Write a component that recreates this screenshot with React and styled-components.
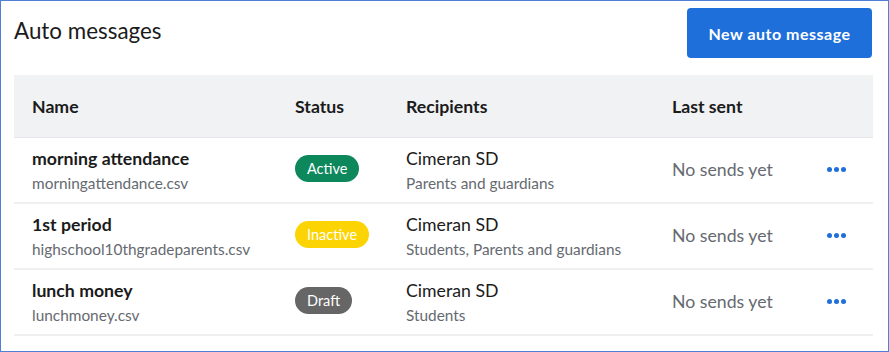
import React from 'react';
import styled, { createGlobalStyle } from 'styled-components';

const GlobalStyle = createGlobalStyle`
	html, body {
		margin: 0;
		padding: 0;
		background: #ffffff;
	}
	body {
		font-family: Lato, 'Noto Sans', sans-serif;
		color: #1b1b1b;
	}
`

const Frame = styled.div`
	box-sizing: border-box;
	width: 889px;
	height: 352px;
	border: 1px solid #4f7fd6;
	padding: 7px 16px 0 13px;
	overflow: hidden;
`

const TopBar = styled.div`
	display: flex;
	justify-content: space-between;
	align-items: flex-start;
	height: 67px;
`

const Title = styled.h1`
	margin: 9px 0 0;
	font-size: 22.4px;
	font-weight: 400;
	color: #1b1b1b;
`

const PrimaryButton = styled.button`
	width: 185px;
	height: 50px;
	border: none;
	border-radius: 4px;
	background: #1f6fdb;
	color: #ffffff;
	font-family: inherit;
	font-size: 16px;
	font-weight: 700;
	letter-spacing: 0.5px;
	cursor: pointer;
`

const Table = styled.div`
	display: grid;
	grid-template-columns: 281px 111px 266px 1fr;
	width: 859px;
`

const HeadCell = styled.div`
	background: #f1f2f4;
	height: 62px;
	display: flex;
	align-items: center;
	padding-left: ${props => props.first ? '18px' : '0'};
	font-size: 17.7px;
	font-weight: 700;
	border-bottom: 1px solid #e6e7ea;
`

const Cell = styled.div`
	height: 64px;
	border-bottom: 2px solid #eff0f2;
	display: flex;
	flex-direction: column;
	justify-content: center;
	padding-left: ${props => props.first ? '18px' : '0'};
`

const MainText = styled.div`
	font-size: 17.7px;
	font-weight: ${props => props.bold ? 700 : 400};
	color: #1b1b1b;
	line-height: 22px;
`

const SubText = styled.div`
	font-size: 15.4px;
	color: #666a70;
	line-height: 20px;
	margin-top: 3px;
`

const Badge = styled.span`
	align-self: flex-start;
	display: inline-flex;
	align-items: center;
	height: 27px;
	margin-bottom: 3px;
	padding: 0 12px;
	border-radius: 14px;
	font-size: 14.5px;
	color: #ffffff;
	background: ${props => props.bg};
`

const LastSentCell = styled(Cell)`
	flex-direction: row;
	align-items: center;
	justify-content: space-between;
	padding-right: 27px;
	box-sizing: border-box;
	height: 66px;
	padding-bottom: 1px;
`

const Muted = styled.span`
	font-size: 17.7px;
	color: #666a70;
`

const MoreButton = styled.button`
	border: none;
	background: none;
	padding: 0;
	display: flex;
	gap: 2px;
	cursor: pointer;
`

const Dot = styled.span`
	width: 5px;
	height: 5px;
	border-radius: 50%;
	background: #1f6fdb;
`

const badgeColors = {
	Active: '#0d875c',
	Inactive: '#fcd403',
	Draft: '#666666',
}

const rows = [
	{ name: 'morning attendance', file: 'morningattendance.csv', status: 'Active', org: 'Cimeran SD', who: 'Parents and guardians' },
	{ name: '1st period', file: 'highschool10thgradeparents.csv', status: 'Inactive', org: 'Cimeran SD', who: 'Students, Parents and guardians' },
	{ name: 'lunch money', file: 'lunchmoney.csv', status: 'Draft', org: 'Cimeran SD', who: 'Students' },
]

const App = () => {
	return (
		<>
			<GlobalStyle />
			<Frame>
				<TopBar>
					<Title>Auto messages</Title>
					<PrimaryButton>New auto message</PrimaryButton>
				</TopBar>
				<Table>
					<HeadCell first>Name</HeadCell>
					<HeadCell>Status</HeadCell>
					<HeadCell>Recipients</HeadCell>
					<HeadCell>Last sent</HeadCell>
					{
						rows.map((row, idx) => (
							<React.Fragment key={idx}>
								<Cell first>
									<MainText bold>{row.name}</MainText>
									<SubText>{row.file}</SubText>
								</Cell>
								<Cell>
									<Badge bg={badgeColors[row.status]}>{row.status}</Badge>
								</Cell>
								<Cell>
									<MainText>{row.org}</MainText>
									<SubText>{row.who}</SubText>
								</Cell>
								<LastSentCell>
									<Muted>No sends yet</Muted>
									<MoreButton aria-label="More options">
										<Dot /><Dot /><Dot />
									</MoreButton>
								</LastSentCell>
							</React.Fragment>
						))
					}
				</Table>
			</Frame>
		</>
	)
}

export default App;
